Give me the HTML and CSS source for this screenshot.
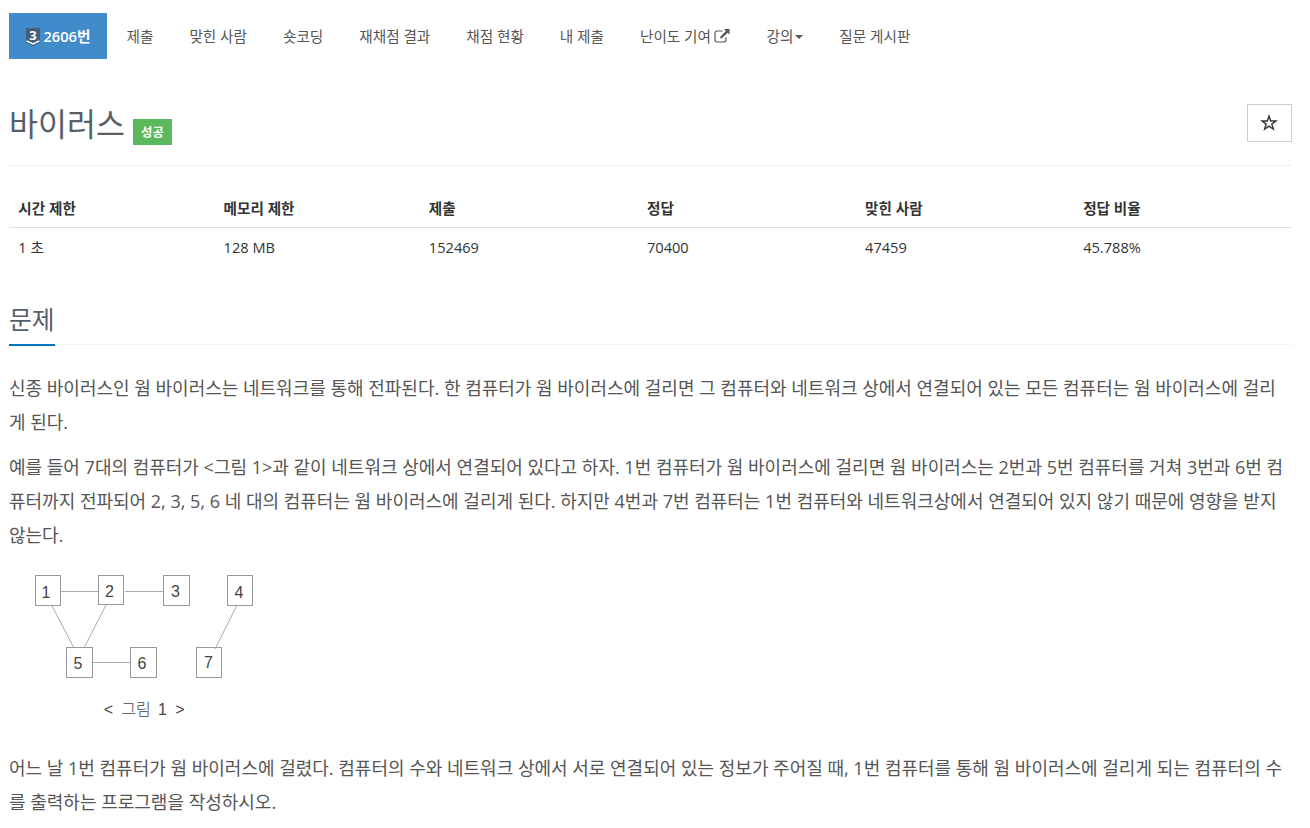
FILE: index.html
```html
<!DOCTYPE html>
<html lang="ko">
  <head>
    <meta charset="UTF-8" />
    <meta name="viewport" content="width=device-width, initial-scale=1.0" />
    <title>2606번: 바이러스</title>
    <link rel="stylesheet" href="styles.css">
  </head>
  <body>
    <div class="container">
      <ul class="problem-menu">
        <li class="active">
          <a>
            <svg class="tier" width="14" height="20" viewBox="0 0 14 20">
              <path d="M0 1H14V15.5L7 19L0 15.5Z" fill="#435f7a" />
              <path d="M0.5 13.8L7 17L13.5 13.8" fill="none" stroke="#fff" stroke-width="1.4" />
              <text x="7" y="12.5">3</text>
            </svg>
            <span>2606번</span>
          </a>
        </li>
        <li><a>제출</a></li>
        <li><a>맞힌 사람</a></li>
        <li><a>숏코딩</a></li>
        <li><a>재채점 결과</a></li>
        <li><a>채점 현황</a></li>
        <li><a>내 제출</a></li>
        <li>
          <a>난이도 기여
            <svg class="external" width="16" height="14" viewBox="0 0 16 14">
              <path d="M8.5 2H3.2Q1 2 1 4.2V10.8Q1 13 3.2 13H9.8Q12 13 12 10.8V8.2" fill="none" stroke="#555" stroke-width="1.2" />
              <path d="M10 0H15.5V5.5L13.6 3.7L7.4 9.8L5.8 8.2L11.9 2Z" fill="#555" />
            </svg>
          </a>
        </li>
        <li><a>강의<span class="caret"></span></a></li>
        <li><a>질문 게시판</a></li>
      </ul>

      <div class="page-header">
        <h1>바이러스</h1>
        <span class="label">성공</span>
        <button class="favorite">
          <svg width="18" height="18" viewBox="0 0 16 16">
            <path d="M8 1.8L9.5 6.2H14.2L10.5 9L11.9 13.5L8 10.8L4.1 13.5L5.5 9L1.8 6.2H6.5Z" fill="none" stroke="#333" stroke-width="1.2" />
          </svg>
        </button>
      </div>

      <table class="problem-info">
        <thead>
          <tr>
            <th class="narrow">시간 제한</th>
            <th class="narrow">메모리 제한</th>
            <th>제출</th>
            <th>정답</th>
            <th>맞힌 사람</th>
            <th>정답 비율</th>
          </tr>
        </thead>
        <tbody>
          <tr>
            <td>1 초</td>
            <td>128 MB</td>
            <td>152469</td>
            <td>70400</td>
            <td>47459</td>
            <td>45.788%</td>
          </tr>
        </tbody>
      </table>

      <div class="headline">
        <h2>문제</h2>
      </div>

      <div class="problem-text">
        <p>신종 바이러스인 웜 바이러스는 네트워크를 통해 전파된다. 한 컴퓨터가 웜 바이러스에 걸리면 그 컴퓨터와 네트워크 상에서 연결되어 있는 모든 컴퓨터는 웜 바이러스에 걸리<br>게 된다.</p>
        <p>예를 들어 7대의 컴퓨터가 &lt;그림 1&gt;과 같이 네트워크 상에서 연결되어 있다고 하자. 1번 컴퓨터가 웜 바이러스에 걸리면 웜 바이러스는 2번과 5번 컴퓨터를 거쳐 3번과 6번 컴<br>퓨터까지 전파되어 2, 3, 5, 6 네 대의 컴퓨터는 웜 바이러스에 걸리게 된다. 하지만 4번과 7번 컴퓨터는 1번 컴퓨터와 네트워크상에서 연결되어 있지 않기 때문에 영향을 받지<br>않는다.</p>
        <svg class="network" width="260" height="177" viewBox="9 563 260 177">
          <g class="edges">
            <path d="M61 591.5H98M125 591.5H164M93 662.5H131" />
            <path d="M52 606L74 648M106 605L84 648M237 605L215 649" />
          </g>
          <g class="nodes">
            <rect x="35.5" y="575.5" width="25" height="30" />
            <rect x="98.5" y="575.5" width="25" height="29" />
            <rect x="163.5" y="575.5" width="26" height="30" />
            <rect x="227.5" y="575.5" width="25" height="30" />
            <rect x="66.5" y="647.5" width="26" height="30" />
            <rect x="130.5" y="647.5" width="26" height="30" />
            <rect x="196.5" y="647.5" width="25" height="30" />
          </g>
          <g class="numbers">
            <text x="46" y="597.5">1</text>
            <text x="109.5" y="597">2</text>
            <text x="175.5" y="596.5">3</text>
            <text x="239" y="597.5">4</text>
            <text x="78" y="668.5">5</text>
            <text x="142" y="668.5">6</text>
            <text x="208.5" y="668">7</text>
          </g>
          <g class="caption">
            <text x="108.5" y="715">&lt;</text>
            <text x="136" y="715">그림</text>
            <text x="162.5" y="715">1</text>
            <text x="180" y="715">&gt;</text>
          </g>
        </svg>
        <p>어느 날 1번 컴퓨터가 웜 바이러스에 걸렸다. 컴퓨터의 수와 네트워크 상에서 서로 연결되어 있는 정보가 주어질 때, 1번 컴퓨터를 통해 웜 바이러스에 걸리게 되는 컴퓨터의 수<br>를 출력하는 프로그램을 작성하시오.</p>
      </div>
    </div>
  </body>
</html>
```

FILE: styles.css
```css
* {
  box-sizing: border-box;
}
body {
  margin: 0;
  background-color: #fff;
  color: #333;
  font-family: "Open Sans", "Noto Sans CJK KR", sans-serif;
  font-size: 14.625px;
  line-height: 22px;
  overflow: hidden;
}
.container {
  padding: 13px 18px 0 9px;
}
.problem-menu {
  display: flex;
  gap: 2px;
  height: 46px;
  margin: 0;
  padding: 0;
  list-style: none;
}
.problem-menu a {
  display: flex;
  align-items: center;
  height: 46px;
  padding: 0 16.5px 0 17.5px;
  color: #555;
  white-space: nowrap;
}
.problem-menu .active a {
  width: 98px;
  padding: 0 16px;
  background-color: #428bca;
  color: #fff;
  font-weight: 600;
}
.tier {
  flex: none;
  margin: 2px 3.5px 0 1px;
  overflow: visible;
}
.tier text {
  fill: #fff;
  font-size: 13px;
  font-weight: 700;
}
.external {
  margin-left: 3.5px;
}
.caret {
  margin: 2px 0 0 2px;
  border-top: 4px solid #555;
  border-left: 4px solid transparent;
  border-right: 4px solid transparent;
}
.page-header {
  display: flex;
  align-items: flex-start;
  height: 107px;
  padding-top: 45px;
  border-bottom: 1px solid #eee;
}
h1 {
  margin: 0;
  color: #585f69;
  font-size: 31.5px;
  font-weight: 400;
  line-height: 40px;
}
.label {
  width: 39px;
  height: 26px;
  margin: 15px 0 0 8px;
  background-color: #5cb85c;
  color: #fff;
  font-size: 12.375px;
  font-weight: 600;
  line-height: 27px;
  text-align: center;
}
.favorite {
  display: flex;
  align-items: center;
  justify-content: center;
  width: 45px;
  height: 38px;
  margin-left: auto;
  padding: 0 2px 0 0;
  background-color: #fff;
  border: 1px solid #ccc;
}
.problem-info {
  width: 100%;
  margin-top: 23px;
  border-collapse: collapse;
  table-layout: fixed;
}
.problem-info th,
.problem-info td {
  height: 39px;
  padding: 0 9.3px;
  text-align: left;
}
.problem-info th {
  width: 17%;
  height: 38px;
  padding-top: 1px;
  border-bottom: 1px solid #ddd;
  font-weight: 700;
}
.problem-info th.narrow {
  width: 16%;
}
.headline {
  display: flex;
  height: 46px;
  margin-top: 33px;
  border-bottom: 1px dotted #e4e9f0;
}
.headline h2 {
  height: 47px;
  margin: 0;
  border-bottom: 2px solid #0076c0;
  color: #585f69;
  font-size: 24.75px;
  font-weight: 400;
  line-height: 42px;
}
.problem-text {
  padding-top: 27.3px;
  color: #555;
  font-size: 18px;
  line-height: 33.75px;
}
.problem-text p {
  margin: 0 0 11.25px;
  white-space: nowrap;
}
.network {
  display: block;
  margin: -12px 0 12.45px;
}
.problem-text p + p {
  margin-bottom: 22.5px;
}
.edges {
  fill: none;
  stroke: #aaa;
}
.nodes {
  fill: none;
  stroke: #999;
}
.numbers text,
.caption text,
.tier text {
  text-anchor: middle;
}
.numbers {
  fill: #444;
  font-family: "Liberation Sans", sans-serif;
  font-size: 16px;
}
.caption {
  fill: #444;
  font-family: "Liberation Sans", "Noto Sans CJK KR", sans-serif;
  font-size: 16px;
  font-weight: 300;
}
```
